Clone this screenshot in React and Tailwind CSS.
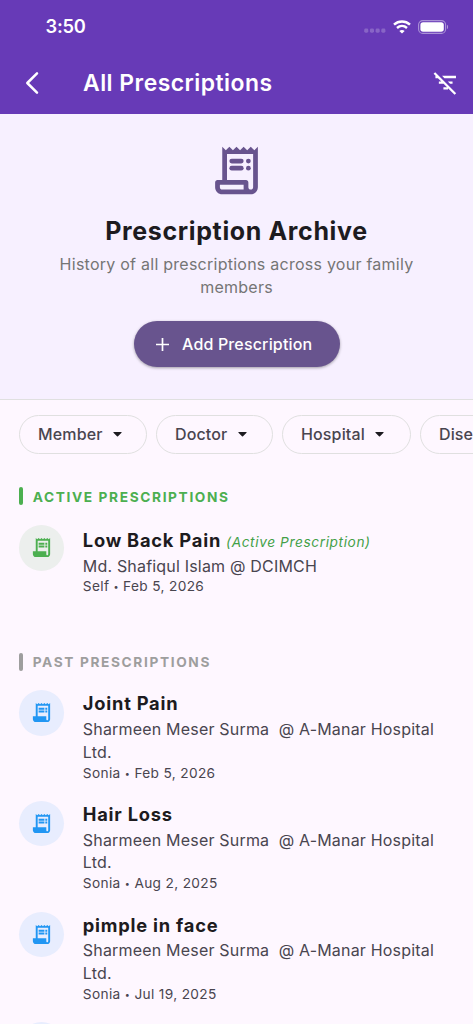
import { MdFilterListOff, MdReceiptLong } from 'react-icons/md'

const FILTERS = [
  { label: 'Member', width: 'w-[128px]' },
  { label: 'Doctor', width: 'w-[117px]' },
  { label: 'Hospital', width: 'w-[129px]' },
  { label: 'Disease', width: 'w-[128px]' },
]

const ACTIVE = [
  { id: 1, title: 'Low Back Pain', doctor: 'Md. Shafiqul Islam @ DCIMCH', member: 'Self', date: 'Feb 5, 2026' },
]

const PAST = [
  { id: 2, title: 'Joint Pain', doctor: 'Sharmeen Meser Surma  @ A-Manar Hospital Ltd.', member: 'Sonia', date: 'Feb 5, 2026' },
  { id: 3, title: 'Hair Loss', doctor: 'Sharmeen Meser Surma  @ A-Manar Hospital Ltd.', member: 'Sonia', date: 'Aug 2, 2025' },
  { id: 4, title: 'pimple in face', doctor: 'Sharmeen Meser Surma  @ A-Manar Hospital Ltd.', member: 'Sonia', date: 'Jul 19, 2025' },
]

function StatusBar() {
  return (
    <div className="flex h-[50px] items-center justify-between pl-[45.5px] pr-[24px] pt-[3px]">
      <span className="text-[18.3px] leading-none font-semibold tracking-[-0.25px]">3:50</span>
      <div className="flex items-center">
        <svg width="22" height="14" viewBox="0 0 22 14" className="mr-[7px]">
          {[2.2, 7.9, 13.6, 19.3].map(x => (
            <rect key={x} x={x - 2} y="8.6" width="4.1" height="4.1" rx="1.4" fill="white" fillOpacity="0.22" />
          ))}
        </svg>
        <svg width="18" height="14" viewBox="0 0 18 14" className="mr-[7px]" fill="none" stroke="white">
          <path d="M1 4.6C5.6.5 12.4.5 17 4.6" strokeWidth="2.5" />
          <path d="M4 8C6.9 5.4 11.1 5.4 14 8" strokeWidth="2.4" />
          <path d="M9 13.6 6.3 10.9C7.8 9.6 10.2 9.6 11.7 10.9Z" fill="white" stroke="none" />
        </svg>
        <svg width="31" height="14" viewBox="0 0 31 14">
          <rect x="0.6" y="0.6" width="27" height="12.8" rx="4.2" fill="none" stroke="white" strokeOpacity="0.45" strokeWidth="1.1" />
          <rect x="2.4" y="2.3" width="23.4" height="9.4" rx="2.7" fill="white" />
          <path d="M29 4.8c1.4.6 1.4 3.8 0 4.4z" fill="white" fillOpacity="0.5" />
        </svg>
      </div>
    </div>
  )
}

function ArchiveIcon() {
  return (
    <svg width="57" height="57" viewBox="0 0 24 24" fill="#68548E">
      <path
        fillRule="evenodd"
        d="M19.5 3.5 18 2l-1.5 1.5L15 2l-1.5 1.5L12 2l-1.5 1.5L9 2 7.5 3.5 6 2v14H4c-.55 0-1 .45-1 1v2c0 1.66 1.34 3 3 3h12c1.66 0 3-1.34 3-3V2zM15 20H6c-.55 0-1-.45-1-1v-1h10zm4-1c0 .55-.45 1-1 1s-1-.45-1-1v-2c0-.55-.45-1-1-1H8V5h11z"
      />
      <rect x="9" y="7" width="6" height="2" rx="1" />
      <rect x="9" y="10" width="6" height="2" rx="1" />
      <circle cx="17" cy="8" r="1" />
      <circle cx="17" cy="11" r="1" />
    </svg>
  )
}

function SectionTitle({ children, active }) {
  return (
    <div className="flex h-[18px] items-center">
      <span className={`h-[18px] w-[4.6px] rounded-[2px] ${active ? 'bg-[#4CAF50]' : 'bg-[#9E9E9E]'}`} />
      <h2 className={`ml-[9.6px] pt-[2px] text-[13.7px] leading-none font-bold tracking-[1.63px] ${active ? 'text-[#4CAF50]' : 'text-[#9E9E9E]'}`}>
        {children}
      </h2>
    </div>
  )
}

function ItemIcon({ active }) {
  return (
    <span
      className={`flex size-[45.7px] shrink-0 items-center justify-center rounded-full ${
        active ? 'mt-[-2px] bg-[#ECEFED] text-[#4CAF50]' : 'bg-[#E8EDFE] text-[#2196F3]'
      }`}
    >
      <MdReceiptLong size={23} />
    </span>
  )
}

function PrescriptionItem({ item, active }) {
  return (
    <li className="flex">
      <ItemIcon active={active} />
      <div className={`ml-[18.6px] w-[366px] ${active ? 'pt-[0.2px]' : 'pt-[0.5px]'}`}>
        <h3 className="flex h-[27.4px] items-baseline text-[18.3px] leading-[27.4px] font-bold tracking-[0.78px] text-[#1D1B20]">
          {item.title}
          {active && (
            <span className="ml-[5px] text-[13.7px] leading-none font-normal tracking-[0.6px] text-[#43A047] italic">
              (Active Prescription)
            </span>
          )}
        </h3>
        <p className="text-[16px] leading-[22.85px] tracking-[0.19px] whitespace-pre-wrap text-[#49454F]">{item.doctor}</p>
        <p className="h-[18.3px] text-[13.7px] leading-[18.9px] tracking-[0.34px] text-[#49454F]">
          {item.member} <span className="relative -top-px text-[9px] leading-none">•</span> {item.date}
        </p>
      </div>
    </li>
  )
}

export default function App() {
  return (
    <div className="flex h-[1024px] w-[473px] flex-col overflow-hidden bg-[#FEF7FF] font-['Inter',sans-serif]">
      <header className="h-[114.3px] shrink-0 bg-[#673AB7] text-white">
        <StatusBar />
        <div className="flex h-[65px] items-center pr-[14px] pl-[25px]">
          <svg width="14" height="24" viewBox="0 0 14 24" fill="none" stroke="white" strokeWidth="2.5" strokeLinecap="round" strokeLinejoin="round">
            <path d="M12 2.3 2.3 12l9.7 9.7" />
          </svg>
          <h1 className="ml-[44px] flex-1 pt-[2px] text-[22.9px] leading-none font-semibold tracking-[0.48px]">All Prescriptions</h1>
          <MdFilterListOff size={27.4} />
        </div>
      </header>

      <section className="flex h-[285.7px] shrink-0 flex-col items-center border-b border-[#E0E0E0] bg-[#F7F0FF] pt-[27.5px]">
        <ArchiveIcon />
        <h2 className="mt-[14px] text-[25px] leading-[36.5px] font-bold tracking-[0.64px] text-[#1D1B20]">Prescription Archive</h2>
        <p className="mt-[4px] w-[380px] text-center text-[16px] leading-[22.85px] tracking-[0.25px] text-[#757575]">
          History of all prescriptions across your family members
        </p>
        <button className="mt-[22.5px] flex h-[45.7px] w-[206px] shrink-0 items-center rounded-full bg-[#68548E] pl-[22px] text-white shadow-[0_1px_3px_rgba(0,0,0,0.35)]">
          <svg width="13" height="13" viewBox="0 0 13 13" stroke="white" strokeWidth="1.7">
            <path d="M6.5 0v13M0 6.5h13" />
          </svg>
          <span className="ml-[13.5px] text-[16px] leading-none font-medium tracking-[0.16px]">Add Prescription</span>
        </button>
      </section>

      <div className="flex shrink-0 gap-[9px] overflow-hidden pt-[15px] pl-[18.5px]">
        {FILTERS.map(filter => (
          <button
            key={filter.label}
            className={`flex h-[39px] shrink-0 items-center rounded-full border border-[#E0E0E0] pl-[18.5px] text-[16px] font-medium tracking-[0.14px] text-[#49454F] ${filter.width}`}
          >
            {filter.label}
            <svg width="9" height="5" viewBox="0 0 9 5" className="ml-[10.5px]" fill="#1D1B20">
              <path d="M.9 0h7.2c.5 0 .7.5.4.8L5 4.3c-.3.3-.7.3-1 0L.5.8C.2.5.4 0 .9 0z" />
            </svg>
          </button>
        ))}
      </div>

      <main className="px-[18.5px]">
        <div className="mt-[33.5px]">
          <SectionTitle active>ACTIVE PRESCRIPTIONS</SectionTitle>
        </div>
        <ul className="mt-[21.5px] h-[126px]">
          {ACTIVE.map(item => (
            <PrescriptionItem key={item.id} item={item} active />
          ))}
        </ul>
        <SectionTitle>PAST PRESCRIPTIONS</SectionTitle>
        <ul className="mt-[19px] space-y-[18.9px]">
          {PAST.map(item => (
            <PrescriptionItem key={item.id} item={item} />
          ))}
          <li className="flex">
            <ItemIcon />
          </li>
        </ul>
      </main>
    </div>
  )
}
